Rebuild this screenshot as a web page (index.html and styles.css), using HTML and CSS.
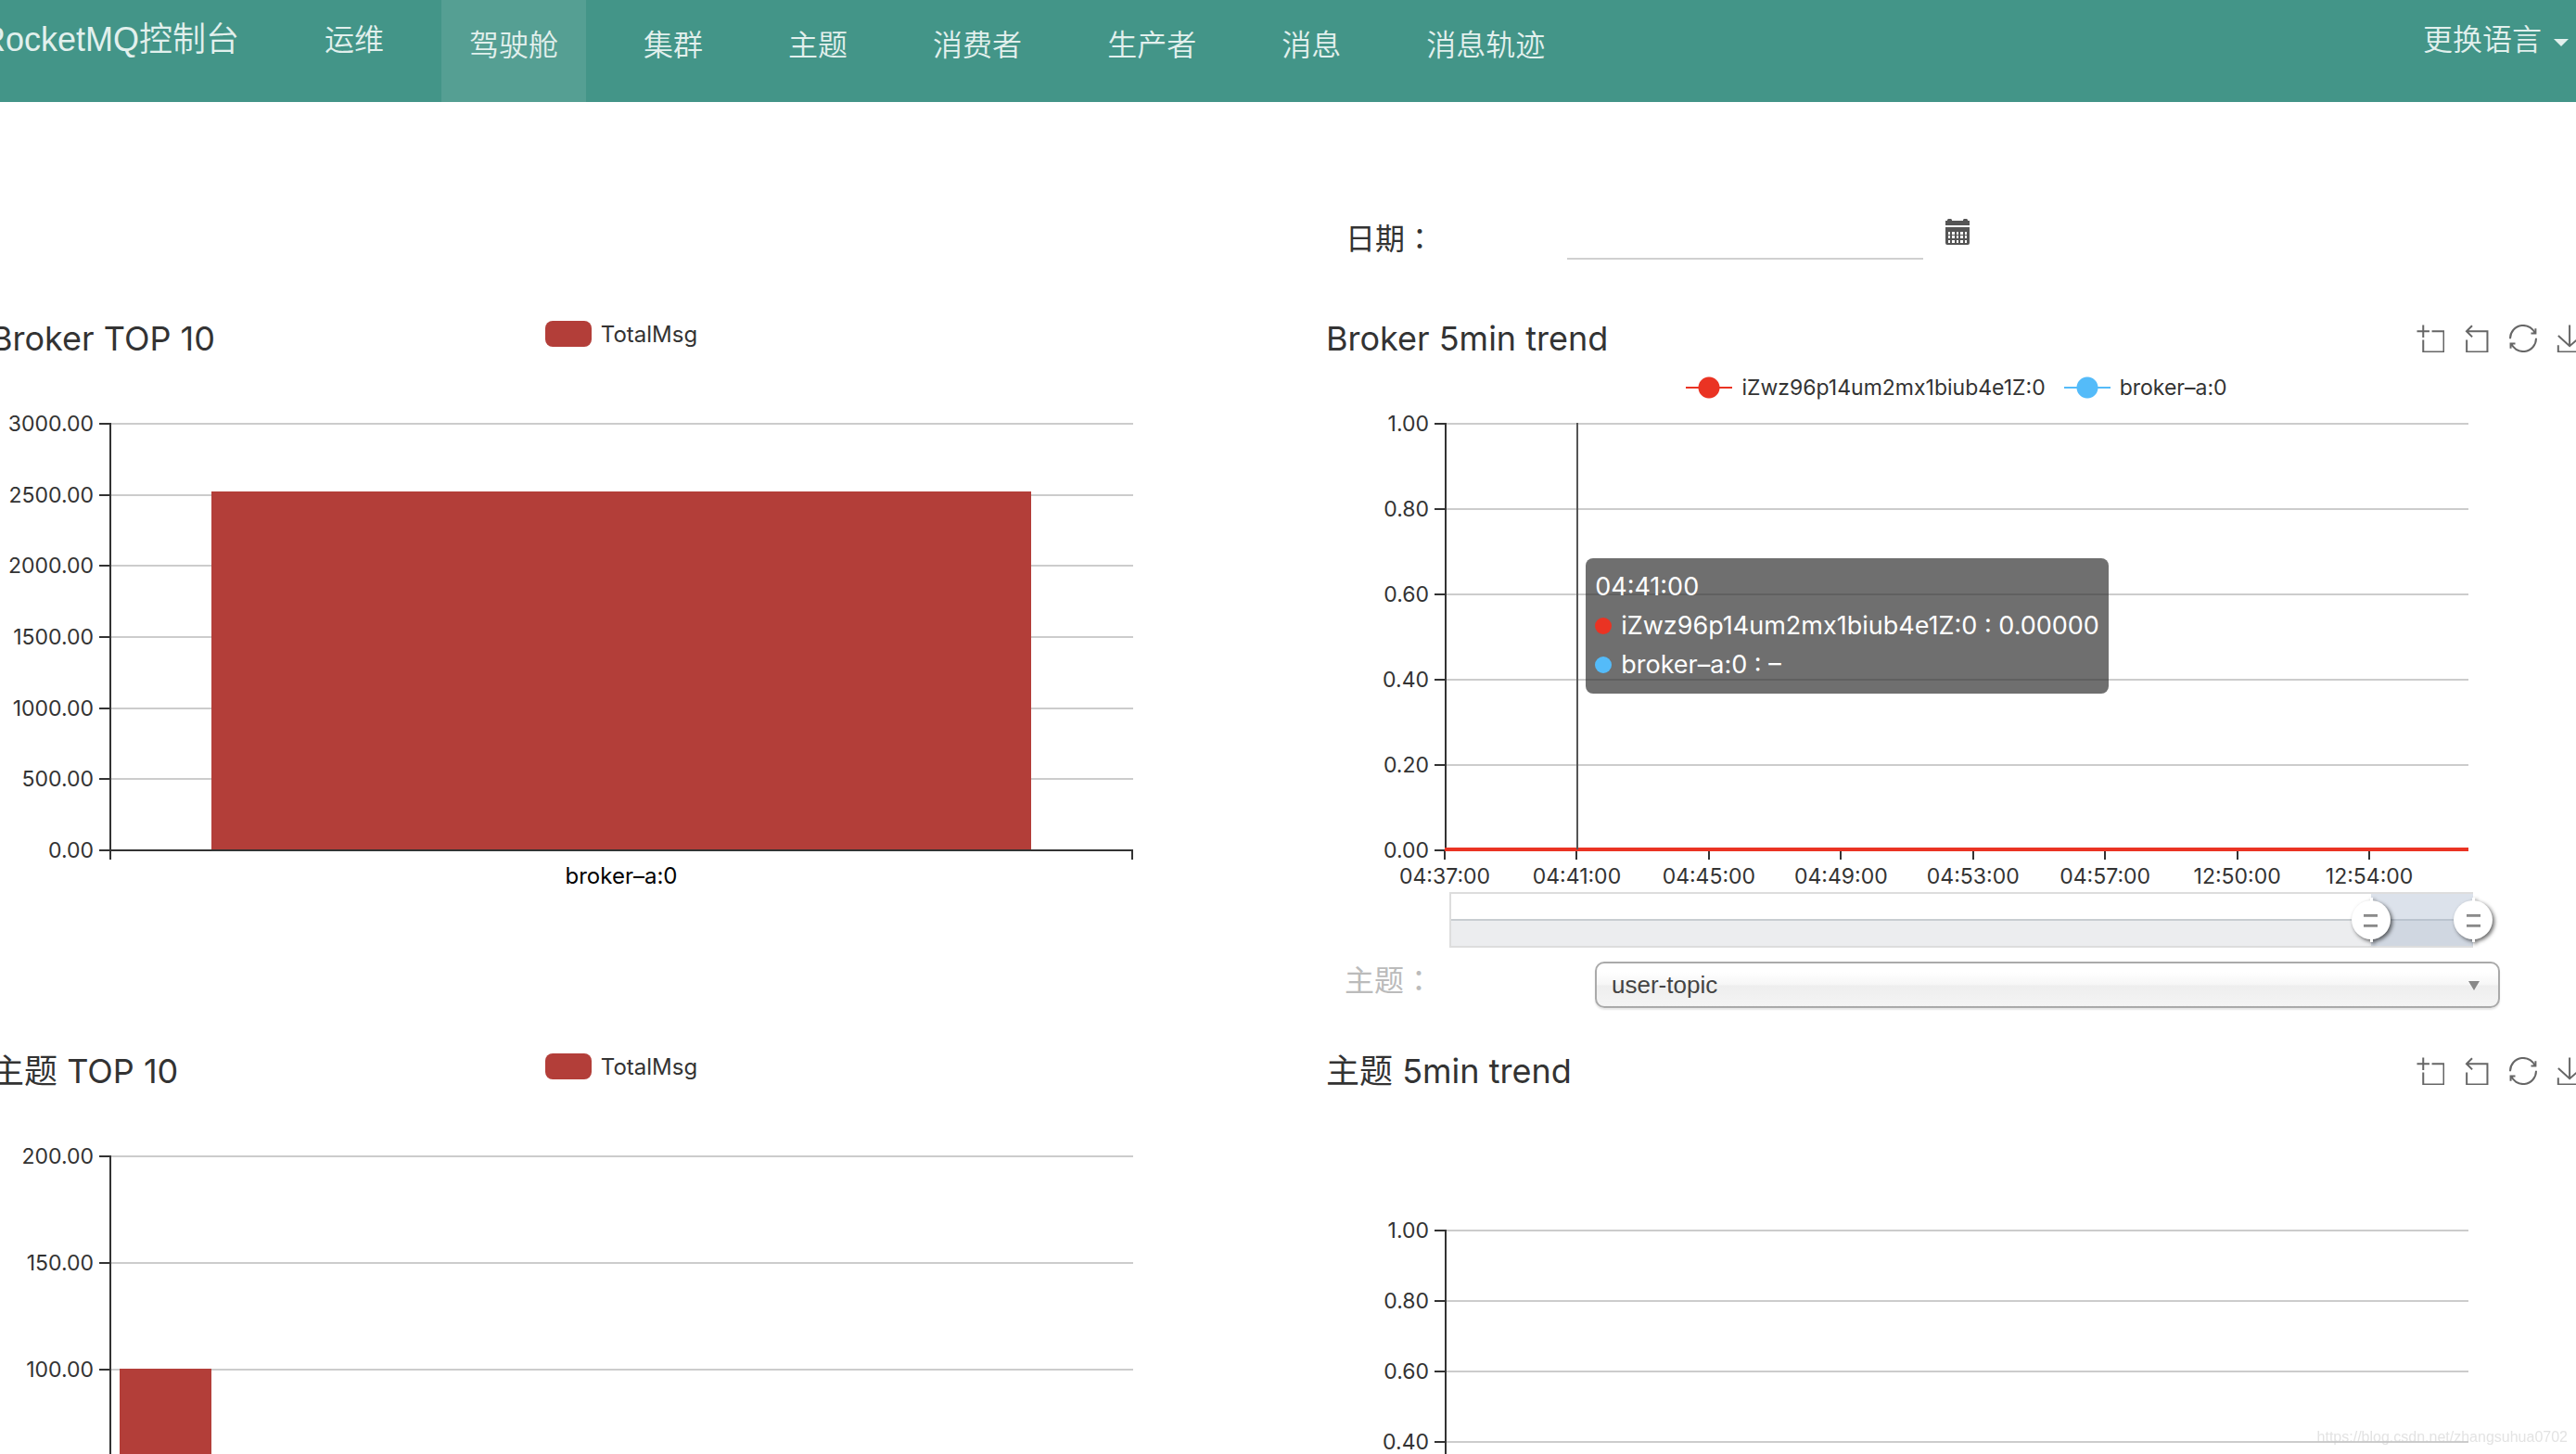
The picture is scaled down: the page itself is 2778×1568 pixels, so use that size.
FILE: index.html
```html
<!DOCTYPE html>
<html lang="zh-CN">
<head>
    <meta charset="UTF-8">
    <meta name="viewport" content="width=device-width, initial-scale=1.0">
    <title>RocketMQ控制台</title>
    <link rel="stylesheet" href="styles.css">
</head>
<body>
    <svg width="0" height="0" class="sprite">
        <symbol id="icon-zoom" viewBox="-1 -1 60 60"><path d="M0,13.5h26.9 M13.5,26.9V0 M32.1,13.5H58V58H13.5 V32.1"/></symbol>
        <symbol id="icon-back" viewBox="2 -1 60 60"><path d="M22,1.4L9.9,13.5l12.3,12.3 M10.3,13.5H54.9v44.6 H10.3v-26"/></symbol>
        <symbol id="icon-restore" viewBox="0 0 60 60"><path d="M47,18.9h9.8V8.7 M56.3,20.1 C52.1,9,40.5,0.6,26.8,2.1C12.6,3.7,1.6,16.2,2.1,30.6 M13,41.1H3.1v10.2 M3.7,39.9c4.2,11.1,15.8,19.5,29.5,18 c14.2-1.6,25.2-14.1,24.7-28.5"/></symbol>
        <symbol id="icon-save" viewBox="-1 -1 60 60"><path d="M4.7,22.9L29.3,45.5L54.7,23.4 M4.6,43.6V58H53.8V43.6 M29.2,45.1V0"/></symbol>
    </svg>
    <div class="page">
        <header class="navbar">
            <a href="#" class="brand">RocketMQ控制台</a>
            <nav class="nav">
                <a href="#" class="raised">运维</a>
                <a href="#" class="active">驾驶舱</a>
                <a href="#">集群</a>
                <a href="#">主题</a>
                <a href="#">消费者</a>
                <a href="#">生产者</a>
                <a href="#">消息</a>
                <a href="#">消息轨迹</a>
            </nav>
            <button class="lang">更换语言<span class="caret"></span></button>
        </header>

        <main class="dashboard">
            <div class="column column-top">
                <section class="chart">
                    <div class="chart-head">
                        <h2>Broker TOP 10</h2>
                        <div class="legend"><span class="swatch"></span>TotalMsg</div>
                    </div>
                    <ul class="y-axis">
                        <li>3000.00</li><li>2500.00</li><li>2000.00</li><li>1500.00</li><li>1000.00</li><li>500.00</li><li>0.00</li>
                    </ul>
                    <div class="plot">
                        <div class="lines"><i></i><i></i><i></i><i></i><i></i><i></i><i></i></div>
                        <div class="bars"><div class="bar" style="margin-left: 10%; width: 80%; height: 84%"></div></div>
                    </div>
                    <div class="x-names"><span>broker–a:0</span></div>
                </section>
                <section class="chart">
                    <div class="chart-head">
                        <h2>主题 TOP 10</h2>
                        <div class="legend"><span class="swatch"></span>TotalMsg</div>
                    </div>
                    <ul class="y-axis">
                        <li>200.00</li><li>150.00</li><li>100.00</li><li>50.00</li><li>0.00</li>
                    </ul>
                    <div class="plot">
                        <div class="lines"><i></i><i></i><i></i><i></i><i></i></div>
                        <div class="bars"><div class="bar" style="margin-left: 1%; width: 9%; height: 50%"></div></div>
                    </div>
                </section>
            </div>

            <div class="column">
                <div class="date-row">
                    <label for="date">日期<span class="colon" lang="zh-TW">：</span></label>
                    <input type="text" id="date">
                    <button class="calendar" aria-label="日期">
                        <svg viewBox="0 0 26 28">
                            <path fill="#555" fill-rule="evenodd" d="M0 2h2V1l1-1h3l1 1v1h12V1l1-1h3l1 1v1h2v5H0z M0 9h26v17q0 2-2 2H2q-2 0-2-2z M3 14v3h2v-3z M7 14v3h3v-3z M12 14v3h2v-3z M16 14v3h3v-3z M21 14v3h2v-3z M3 18v3h2v-3z M7 18v3h3v-3z M12 18v3h2v-3z M16 18v3h3v-3z M21 18v3h2v-3z M3 23v3h2v-3z M7 23v3h3v-3z M12 23v3h2v-3z M16 23v3h3v-3z M21 23v3h2v-3z"/>
                        </svg>
                    </button>
                </div>
                <section class="chart trend">
                    <div class="chart-head">
                        <h2>Broker 5min trend</h2>
                        <div class="toolbox">
                            <svg><use href="#icon-zoom"/></svg>
                            <svg><use href="#icon-back"/></svg>
                            <svg><use href="#icon-restore"/></svg>
                            <svg><use href="#icon-save"/></svg>
                        </div>
                        <div class="legend">
                            <span class="line red"></span>iZwz96p14um2mx1biub4e1Z:0
                            <span class="line blue"></span>broker–a:0
                        </div>
                    </div>
                    <ul class="y-axis">
                        <li>1.00</li><li>0.80</li><li>0.60</li><li>0.40</li><li>0.20</li><li>0.00</li>
                    </ul>
                    <div class="plot">
                        <div class="lines"><i></i><i></i><i></i><i></i><i></i><i></i></div>
                        <div class="series"></div>
                        <div class="pointer"></div>
                        <div class="tooltip">
                            <div>04:41:00</div>
                            <div><span class="dot red"></span>iZwz96p14um2mx1biub4e1Z:0 : 0.00000</div>
                            <div><span class="dot blue"></span>broker–a:0 : –</div>
                        </div>
                    </div>
                    <div class="x-axis">
                        <ul class="x-times">
                            <li>04:37:00</li><li>04:41:00</li><li>04:45:00</li><li>04:49:00</li><li>04:53:00</li><li>04:57:00</li><li>12:50:00</li><li>12:54:00</li>
                        </ul>
                        <div class="zoom-bar">
                            <div class="zoom-range">
                                <span class="handle start"></span>
                                <span class="handle end"></span>
                            </div>
                        </div>
                    </div>
                </section>
                <div class="topic-row">
                    <label for="topic">主题<span class="colon" lang="zh-TW">：</span></label>
                    <div class="select">
                        <select id="topic"><option>user-topic</option></select>
                    </div>
                </div>
                <section class="chart trend empty">
                    <div class="chart-head">
                        <h2>主题 5min trend</h2>
                        <div class="toolbox">
                            <svg><use href="#icon-zoom"/></svg>
                            <svg><use href="#icon-back"/></svg>
                            <svg><use href="#icon-restore"/></svg>
                            <svg><use href="#icon-save"/></svg>
                        </div>
                    </div>
                    <ul class="y-axis">
                        <li>1.00</li><li>0.80</li><li>0.60</li><li>0.40</li><li>0.20</li><li>0.00</li>
                    </ul>
                    <div class="plot">
                        <div class="lines"><i></i><i></i><i></i><i></i><i></i><i></i></div>
                    </div>
                </section>
            </div>
        </main>
    </div>
    <div class="watermark">https://blog.csdn.net/zhangsuhua0702</div>
</body>
</html>
```
FILE: styles.css
```css
* {
    box-sizing: border-box;
}
body, html {
    margin: 0;
    padding: 0;
    width: 100%;
    height: 100%;
    overflow: hidden;
    font-family: "Liberation Sans", "Noto Sans CJK SC", sans-serif;
    color: #333;
    background-color: #fff;
}
ul {
    list-style: none;
    margin: 0;
    padding: 0;
}
.sprite {
    display: none;
}
.page {
    margin: 0 -22px 0 -20px;
}

/* navbar */
.navbar {
    display: flex;
    height: 110px;
    padding-right: 30px;
    background-color: #439588;
    font-size: 32px;
    line-height: 86px;
    font-weight: 350;
}
.navbar a {
    color: #e2f0ed;
    text-decoration: none;
    white-space: nowrap;
}
.brand {
    font-size: 36px;
    margin-right: 62px;
}
.nav {
    display: flex;
    gap: 32px;
    flex: 1;
}
.nav a {
    padding: 0 30px;
    line-height: 98px;
}
.nav a.raised {
    line-height: 86px;
}
.nav a.active {
    background-color: #559f93;
}
.lang {
    display: flex;
    align-items: center;
    gap: 13px;
    height: 86px;
    padding: 0;
    background: none;
    border: none;
    color: #e2f0ed;
    font: inherit;
}
.caret {
    border: 8px solid transparent;
    border-top-color: #e2f0ed;
    border-bottom: none;
    margin-top: 6px;
}

/* layout */
.dashboard {
    display: grid;
    grid-template-columns: 1fr 1fr;
    gap: 60px;
}
.column-top {
    padding-top: 227px;
}
.column-top .chart {
    margin-bottom: 90px;
}
.date-row {
    display: flex;
    height: 227px;
    padding: 122px 0 0 31px;
    font-size: 32px;
}
.date-row label {
    width: 239px;
    line-height: 46px;
}
.date-row input {
    width: 384px;
    height: 48px;
    border: none;
    border-bottom: 2px solid #d0d0d0;
    font-size: 32px;
    background: none;
}
.colon {
    font-family: "Noto Sans CJK TC", sans-serif;
}
.calendar {
    align-self: flex-start;
    margin: 4px 0 0 24px;
    padding: 0;
    border: none;
    background: none;
}
.calendar svg {
    display: block;
    width: 26px;
    height: 28px;
}
.topic-row {
    display: flex;
    height: 90px;
    padding-left: 30px;
}
.topic-row label {
    width: 270px;
    font-size: 32px;
    line-height: 36px;
    color: #bbb;
}
.select {
    position: relative;
    flex: 1;
    margin-right: 104px;
    height: 50px;
}
.select select {
    appearance: none;
    width: 100%;
    height: 50px;
    padding: 0 16px;
    border: 2px solid #aaa;
    border-radius: 10px;
    background: linear-gradient(#fff 20%, #f6f6f6 50%, #eee 52%, #f4f4f4 100%);
    box-shadow: 0 2px 2px rgba(0, 0, 0, 0.1);
    font-family: inherit;
    font-size: 26px;
    color: #444;
}
.select::after {
    content: "";
    position: absolute;
    right: 22px;
    top: 21px;
    border: 6px solid transparent;
    border-top: 10px solid #888;
    border-bottom: none;
}

/* charts */
.chart {
    display: grid;
    grid-template-columns: 10% 80% 10%;
    grid-template-rows: 120px 460px 120px;
    font-family: Inter, "Noto Sans CJK SC", sans-serif;
    font-size: 24px;
}
.trend.empty {
    grid-template-rows: 200px 380px 120px;
}
.chart-head {
    grid-column: 1 / 4;
    display: grid;
    grid-template-columns: 1fr auto 1fr;
    grid-template-rows: 56px 50px;
    padding-left: 10px;
    padding-right: 10px;
}
.chart-head h2 {
    margin: 0;
    font-size: 36px;
    font-weight: 400;
    line-height: 56px;
    white-space: nowrap;
}
.legend {
    display: flex;
    align-items: center;
    gap: 10px;
    height: 46px;
    white-space: nowrap;
}
.trend .legend {
    grid-column: 1 / 4;
    justify-content: center;
    height: 50px;
}
.swatch {
    width: 50px;
    height: 28px;
    border-radius: 8px;
    background-color: #b33e39;
}
.line {
    width: 50px;
    height: 24px;
    background: radial-gradient(circle, currentColor 11px, transparent 12px), linear-gradient(currentColor, currentColor) center / 50px 2px no-repeat;
}
.line.blue {
    margin-left: 10px;
}
.red {
    color: #ea3323;
}
.blue {
    color: #54bbf9;
}
.toolbox {
    grid-column: 3;
    display: flex;
    justify-content: flex-end;
    align-items: center;
    gap: 20px;
    padding-right: 4px;
}
.toolbox svg {
    width: 30px;
    height: 30px;
    fill: none;
    stroke: #666;
    stroke-width: 4;
}
.y-axis {
    display: flex;
    flex-direction: column;
    justify-content: space-between;
    margin: -14px 0;
}
.y-axis, .x-times, .trend .legend {
    font-size: 23px;
}
.y-axis li {
    display: flex;
    justify-content: flex-end;
    align-items: center;
    gap: 6px;
    line-height: 28px;
}
.y-axis li::after {
    content: "";
    width: 11px;
    height: 2px;
    background-color: #333;
}
.plot {
    position: relative;
    display: grid;
    border-left: 2px solid #333;
    border-bottom: 2px solid #333;
    margin: -1px 0;
}
.lines, .bars {
    grid-area: 1 / 1;
}
.lines {
    display: flex;
    flex-direction: column;
    justify-content: space-between;
    margin-bottom: -2px;
}
.lines i {
    height: 2px;
    background-color: #ccc;
}
.lines i:last-child {
    background-color: #333;
}
.bars {
    display: flex;
    align-items: flex-end;
    margin-left: -2px;
}
.bar {
    background-color: #b33e39;
}
.x-names {
    grid-column: 2;
    height: 10px;
    border: solid #333;
    border-width: 0 2px;
    text-align: center;
    color: #000;
}
.x-names span {
    display: block;
    padding-top: 10px;
    line-height: 36px;
}
.x-axis {
    grid-column: 2;
}
.x-times {
    display: flex;
    height: 45px;
}
.x-times li {
    flex: 0 0 calc(400% / 31);
    text-align: center;
    line-height: 36px;
}
.x-times li:first-child {
    margin-left: calc(-200% / 31);
}
.x-times li::before {
    content: "";
    display: block;
    width: 2px;
    height: 10px;
    margin: 0 auto;
    background-color: #333;
}
.series {
    position: absolute;
    left: -2px;
    right: 0;
    bottom: -2px;
    height: 4px;
    background-color: #ea3323;
}
.pointer {
    position: absolute;
    left: calc(400% / 31);
    top: 0;
    bottom: 0;
    width: 2px;
    margin-left: -2px;
    background-color: #555;
}
.tooltip {
    position: absolute;
    left: calc(400% / 31 + 8px);
    top: 146px;
    padding: 10px;
    border-radius: 8px;
    background-color: rgba(50, 50, 50, 0.7);
    color: #fff;
    font-size: 27px;
    line-height: 42px;
    white-space: nowrap;
}
.dot {
    display: inline-block;
    width: 18px;
    height: 18px;
    margin-right: 10px;
    border-radius: 50%;
    background-color: currentColor;
}
.zoom-bar {
    display: flex;
    justify-content: flex-end;
    height: 60px;
    margin: 0 -5px 0 5px;
    border: solid #ddd;
    border-width: 2px 0 2px 2px;
    background: linear-gradient(#fff 27px, #c8cdd1 27px, #c8cdd1 29px, #ecedef 29px);
}
.zoom-range {
    position: relative;
    width: 10%;
    background-color: rgba(167, 183, 204, 0.4);
}
.handle {
    position: absolute;
    top: 7px;
    width: 42px;
    height: 42px;
    border-radius: 50%;
    background: linear-gradient(#777, #aaa) center 15px / 15px 3px no-repeat, linear-gradient(#777, #aaa) center 26px / 15px 3px no-repeat, #fff;
    filter: drop-shadow(2px 2px 2px rgba(0, 0, 0, 0.6));
}
.handle::before {
    content: "";
    position: absolute;
    left: 20px;
    top: -3px;
    width: 3px;
    height: 48px;
    background: linear-gradient(#fff 5px, transparent 5px, transparent 43px, #fff 43px);
}
.handle.start {
    left: -21px;
}
.handle.end {
    right: -21px;
}
.watermark {
    position: fixed;
    right: 9px;
    bottom: 8px;
    font-size: 16px;
    line-height: 20px;
    color: rgba(200, 200, 200, 0.5);
}
```
